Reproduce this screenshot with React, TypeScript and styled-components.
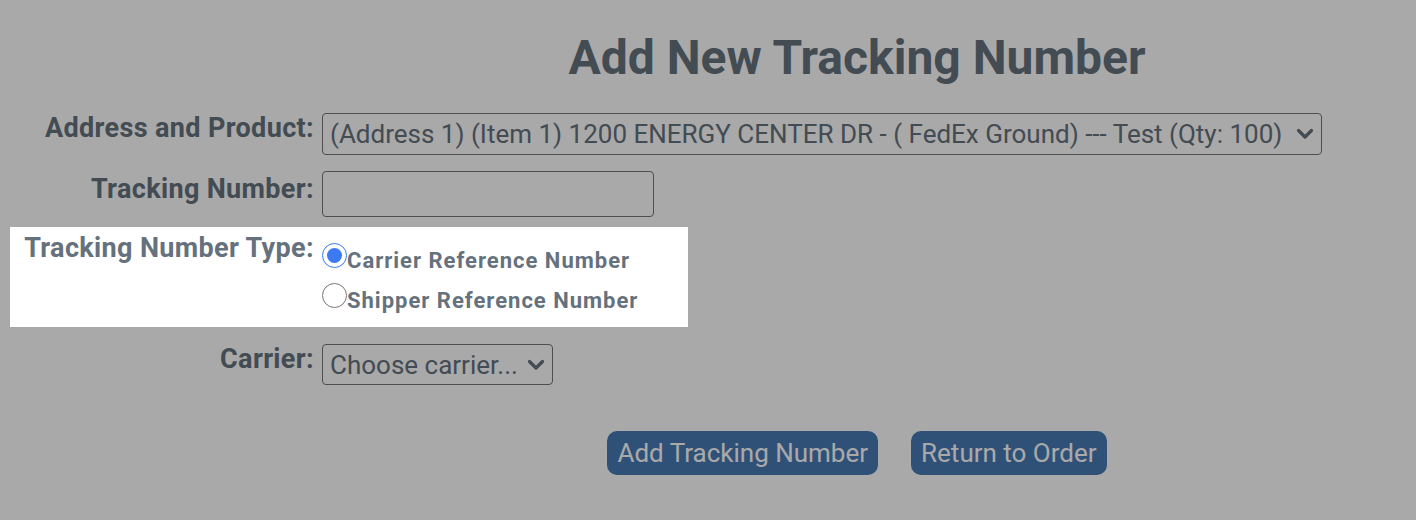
import React from 'react'
import styled, { createGlobalStyle } from 'styled-components'

const GlobalStyle = createGlobalStyle`
  body {
    margin: 0;
    background: #ffffff;
    font-family: Roboto, "Liberation Sans", sans-serif;
    color: #65717d;
  }
`

const Page = styled.div`
  width: 1416px;
  height: 520px;
  overflow: hidden;
  padding: 0 24px 0 10px;
  box-sizing: border-box;
`

const TitleRow = styled.div`
  display: flex;
  padding: 28px 0 0 312px;
`

const Title = styled.h1`
  flex: 1;
  margin: 0 0 17px;
  text-align: center;
  font-size: 48px;
  font-weight: 700;
  line-height: 60px;
  color: #65717d;
`

const Row = styled.div<{ $highlight?: boolean }>`
  display: flex;
  align-items: flex-start;
  gap: 8px;
  padding: 8px 0 8px 12px;
  ${(p) =>
    p.$highlight &&
    `
    width: fit-content;
    margin: 2px 0 9px;
    padding: 6px 50px 6px 12px;
    position: relative;
    z-index: 10;
    background: #ffffff;
    box-shadow: 0 0 0 3000px rgba(0, 0, 0, 0.337);
  `}
`

const Label = styled.label<{ $offset?: number }>`
  width: 292px;
  flex: none;
  display: flex;
  justify-content: flex-end;
  white-space: nowrap;
  font-size: 27px;
  font-weight: 700;
  letter-spacing: 0.35px;
  line-height: 30px;
  padding-top: ${(p) => p.$offset ?? 0}px;
  color: #65717d;
`

const SelectWrap = styled.div<{ $width: number }>`
  position: relative;
  width: ${(p) => p.$width}px;
`

const Select = styled.select<{ $height: number }>`
  appearance: none;
  width: 100%;
  height: ${(p) => p.$height}px;
  box-sizing: border-box;
  border: 1px solid #767676;
  border-radius: 4px;
  background: #ffffff;
  font-family: Roboto, "Liberation Sans", sans-serif;
  font-size: 26px;
  color: #65717d;
  padding: 0 36px 0 7px;
`

const Chevron = styled.svg`
  position: absolute;
  right: 8px;
  top: 50%;
  width: 18px;
  height: 12px;
  margin-top: -6px;
  pointer-events: none;
`

const TextInput = styled.input`
  width: 332px;
  height: 46px;
  box-sizing: border-box;
  border: 1px solid #767676;
  border-radius: 4px;
  background: #ffffff;
  font-family: Roboto, "Liberation Sans", sans-serif;
  font-size: 26px;
`

const RadioList = styled.div`
  padding-top: 8px;
`

const RadioOption = styled.label`
  display: block;
  font-size: 22px;
  font-weight: 700;
  letter-spacing: 1px;
  line-height: 40px;
  white-space: nowrap;
  color: #65717d;
`

const Radio = styled.input`
  width: 25px;
  height: 25px;
  margin: 0;
  vertical-align: baseline;
  accent-color: #3b7af3;
`

const Actions = styled.div`
  display: flex;
  justify-content: center;
  gap: 33px;
  padding: 38px 0 0 312px;
`

const Button = styled.button`
  height: 44px;
  padding: 0 10px;
  border: none;
  border-radius: 10px;
  background: #477ab6;
  color: #ffffff;
  font-family: Roboto, "Liberation Sans", sans-serif;
  font-size: 26px;
`

function SelectBox({ width, height, children }: { width: number; height: number; children: React.ReactNode }) {
  return (
    <SelectWrap $width={width}>
      <Select $height={height}>{children}</Select>
      <Chevron viewBox="0 0 18 12">
        <path d="M2.5 2.5 L9 9 L15.5 2.5" fill="none" stroke="#65717d" strokeWidth="3.2" strokeLinecap="round" strokeLinejoin="round" />
      </Chevron>
    </SelectWrap>
  )
}

export default function App() {
  return (
    <>
      <GlobalStyle />
      <Page>
        <TitleRow>
          <Title>Add New Tracking Number</Title>
        </TitleRow>
        <Row>
          <Label>Address and Product:</Label>
          <SelectBox width={1000} height={42}>
            <option>(Address 1) (Item 1) 1200 ENERGY CENTER DR - ( FedEx Ground) --- Test (Qty: 100)</option>
          </SelectBox>
        </Row>
        <Row>
          <Label $offset={3}>Tracking Number:</Label>
          <TextInput type="text" />
        </Row>
        <Row $highlight>
          <Label>Tracking Number Type:</Label>
          <RadioList>
            <RadioOption>
              <Radio type="radio" name="type" defaultChecked />
              Carrier Reference Number
            </RadioOption>
            <RadioOption>
              <Radio type="radio" name="type" />
              Shipper Reference Number
            </RadioOption>
          </RadioList>
        </Row>
        <Row>
          <Label>Carrier:</Label>
          <SelectBox width={231} height={41}>
            <option>Choose carrier...</option>
          </SelectBox>
        </Row>
        <Actions>
          <Button>Add Tracking Number</Button>
          <Button>Return to Order</Button>
        </Actions>
      </Page>
    </>
  )
}
